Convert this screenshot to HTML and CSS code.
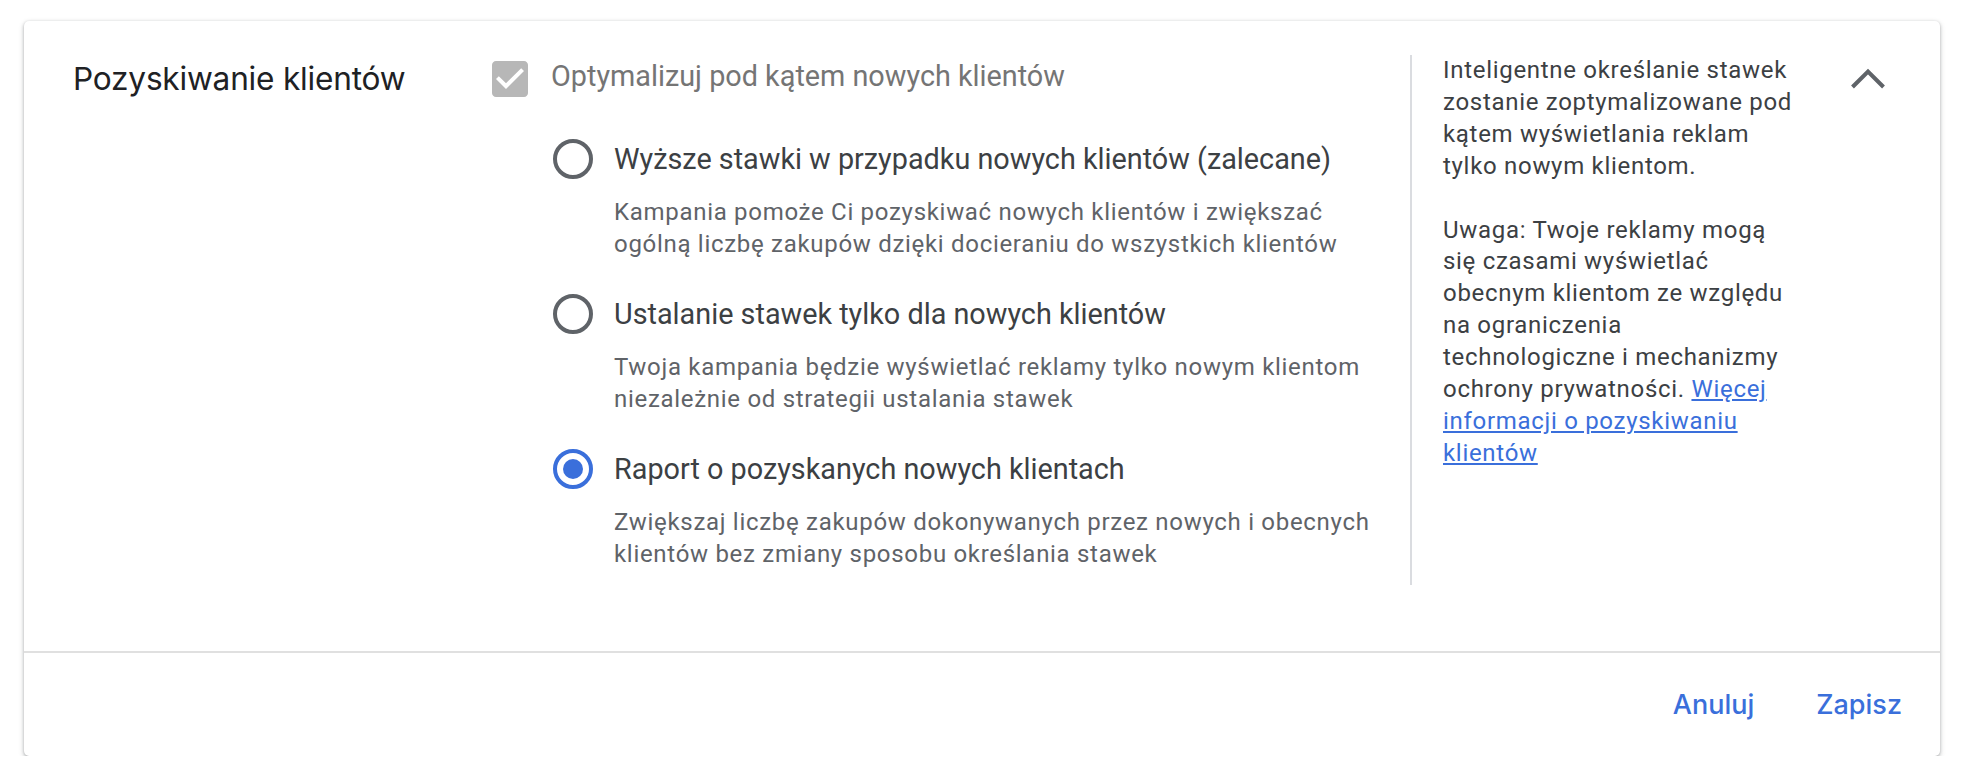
FILE: index.html
```html
<!DOCTYPE html>
<html lang="pl">
<head>
<meta charset="utf-8">
<title>Pozyskiwanie klientów</title>
<link rel="stylesheet" href="styles.css">
</head>
<body>
<div class="card">
  <div class="card-body">
    <div class="section-title">Pozyskiwanie klientów</div>
    <div class="main">
      <div class="check-row">
        <svg class="checkbox" width="36" height="36" viewBox="3 3 18 18" aria-hidden="true">
          <path fill="#b7b7b7" d="M19 3H5c-1.11 0-2 .9-2 2v14c0 1.1.89 2 2 2h14c1.11 0 2-.9 2-2V5c0-1.1-.89-2-2-2z"/>
          <path fill="#ffffff" d="M10 17l-5-5 1.41-1.41L10 14.17l7.59-7.59L19 8l-9 9z"/>
        </svg>
        <span class="check-label">Optymalizuj pod kątem nowych klientów</span>
      </div>
      <div class="options">
        <div class="option">
          <div class="option-row">
            <span class="radio"></span>
            <span class="option-label">Wyższe stawki w przypadku nowych klientów (zalecane)</span>
          </div>
          <div class="option-desc">Kampania pomoże Ci pozyskiwać nowych klientów i zwiększać<br>ogólną liczbę zakupów dzięki docieraniu do wszystkich klientów</div>
        </div>
        <div class="option">
          <div class="option-row">
            <span class="radio"></span>
            <span class="option-label">Ustalanie stawek tylko dla nowych klientów</span>
          </div>
          <div class="option-desc">Twoja kampania będzie wyświetlać reklamy tylko nowym klientom<br>niezależnie od strategii ustalania stawek</div>
        </div>
        <div class="option">
          <div class="option-row">
            <span class="radio radio-checked"></span>
            <span class="option-label">Raport o pozyskanych nowych klientach</span>
          </div>
          <div class="option-desc">Zwiększaj liczbę zakupów dokonywanych przez nowych i obecnych<br>klientów bez zmiany sposobu określania stawek</div>
        </div>
      </div>
    </div>
    <div class="aside">
      <p>Inteligentne określanie stawek<br>zostanie zoptymalizowane pod<br>kątem wyświetlania reklam<br>tylko nowym klientom.</p>
      <p>Uwaga: Twoje reklamy mogą<br>się czasami wyświetlać<br>obecnym klientom ze względu<br>na ograniczenia<br>technologiczne i mechanizmy<br>ochrony prywatności. <a href="#" class="link">Więcej<br>informacji o pozyskiwaniu<br>klientów</a></p>
    </div>
    <div class="toggle">
      <svg width="36" height="22" viewBox="0 0 36 22" aria-hidden="true">
        <polyline points="2.5,19 18,3.5 33.5,19" fill="none" stroke="#5f6368" stroke-width="4"/>
      </svg>
    </div>
  </div>
  <div class="card-footer">
    <button class="btn">Anuluj</button>
    <button class="btn">Zapisz</button>
  </div>
</div>
</body>
</html>
```

FILE: styles.css
```css
html, body {
  margin: 0;
  background: #ffffff;
}

body {
  padding: 21px 26px 0 24px;
  font-family: Roboto, "Liberation Sans", sans-serif;
}

.card {
  background: #ffffff;
  border-radius: 5px;
  box-shadow: 0 1px 3px rgba(60, 64, 67, 0.35), 0 2px 5px 1px rgba(60, 64, 67, 0.15);
}

.card-body {
  display: flex;
  align-items: stretch;
  padding: 34px 54px 66px 49px;
}

.section-title {
  width: 419px;
  flex: none;
  font-family: Inter, "Open Sans", sans-serif;
  font-size: 31.6px;
  line-height: 48px;
  color: #202124;
  letter-spacing: -0.2px;
}

.main {
  flex: 1;
  min-width: 0;
  padding-bottom: 15px;
}

.check-row {
  display: flex;
  align-items: flex-start;
  height: 48px;
}

.checkbox {
  flex: none;
  margin-top: 6px;
}

.check-label {
  margin-left: 23px;
  padding-top: 1px;
  font-size: 28.8px;
  line-height: 40px;
  color: #757575;
}

.options {
  display: flex;
  flex-direction: column;
  gap: 34px;
  margin-top: 36px;
  padding-left: 61px;
}

.option-row {
  display: flex;
  align-items: center;
  height: 40px;
}

.radio {
  flex: none;
  position: relative;
  width: 40px;
  height: 40px;
  box-sizing: border-box;
  border: 4px solid #5f6368;
  border-radius: 50%;
}

.radio-checked {
  border-color: #3a6fdb;
}

.radio-checked::after {
  content: "";
  position: absolute;
  left: 6px;
  top: 6px;
  width: 20px;
  height: 20px;
  border-radius: 50%;
  background: #3a6fdb;
}

.option-label {
  margin-left: 21px;
  font-size: 28.8px;
  line-height: 40px;
  color: #3c4043;
}

.option-desc {
  margin-top: 17px;
  padding-left: 61px;
  font-size: 24px;
  line-height: 32px;
  letter-spacing: 0.7px;
  color: #5f6368;
}

.aside {
  width: 370px;
  flex: none;
  border-left: 2px solid #dadce0;
  padding-left: 31px;
  font-size: 24px;
  line-height: 31.9px;
  letter-spacing: 0.7px;
  color: #3c4043;
}

.aside p {
  margin: 0 0 31.9px 0;
}

.aside p:last-child {
  margin-bottom: 0;
}

.link {
  color: #3a6fdb;
  text-decoration: underline;
}

.toggle {
  flex: none;
  margin-left: 37px;
  padding-top: 13px;
}

.toggle svg {
  display: block;
}

.card-footer {
  display: flex;
  justify-content: flex-end;
  align-items: center;
  gap: 30px;
  height: 103px;
  border-top: 2px solid #e0e0e0;
  padding-right: 22px;
}

.btn {
  background: none;
  border: none;
  padding: 0 16px;
  font-family: Inter, "Open Sans", sans-serif;
  font-size: 27px;
  font-weight: 500;
  color: #3a6fdb;
  cursor: pointer;
}
```
